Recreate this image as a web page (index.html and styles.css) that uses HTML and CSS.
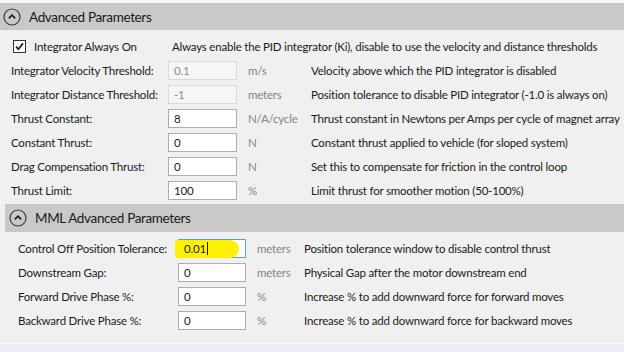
FILE: index.html
```html
<!DOCTYPE html>
<html>
<head>
<meta charset="utf-8">
<link rel="stylesheet" href="styles.css">
</head>
<body>
<div class="page">
  <div class="topstrip"></div>
  <div class="header">
    <svg class="toggle" width="18" height="18" viewBox="0 0 18 18"><circle cx="9" cy="9" r="8" fill="none" stroke="#3a3a3a" stroke-width="1.2"/><path d="M5.8 10.4 L9 7.2 L12.2 10.4" fill="none" stroke="#1a1a1a" stroke-width="1.6"/></svg>
    <span class="htitle">Advanced Parameters</span>
  </div>
  <div class="section s1">
    <div class="checkrow">
      <span class="check"><svg width="11" height="11" viewBox="0 0 11 11"><path d="M2 5.6 L4.4 8.2 L9 2.4" fill="none" stroke="#1a1a1a" stroke-width="1.7"/></svg></span>
      <span class="checklabel">Integrator Always On</span>
      <span class="checkdesc">Always enable the PID integrator (Ki), disable to use the velocity and distance thresholds</span>
    </div>
    <div class="grid g1">
      <span class="lbl">Integrator Velocity Threshold:</span><span class="box dis">0.1</span><span class="unit">m/s</span><span class="desc">Velocity above which the PID integrator is disabled</span>
      <span class="lbl">Integrator Distance Threshold:</span><span class="box dis">-1</span><span class="unit">meters</span><span class="desc">Position tolerance to disable PID integrator (-1.0 is always on)</span>
      <span class="lbl">Thrust Constant:</span><span class="box">8</span><span class="unit">N/A/cycle</span><span class="desc">Thrust constant in Newtons per Amps per cycle of magnet array</span>
      <span class="lbl">Constant Thrust:</span><span class="box">0</span><span class="unit">N</span><span class="desc">Constant thrust applied to vehicle (for sloped system)</span>
      <span class="lbl">Drag Compensation Thrust:</span><span class="box">0</span><span class="unit">N</span><span class="desc">Set this to compensate for friction in the control loop</span>
      <span class="lbl">Thrust Limit:</span><span class="box">100</span><span class="unit">%</span><span class="desc">Limit thrust for smoother motion (50-100%)</span>
    </div>
  </div>
  <div class="sub">
    <div class="header h2">
      <svg class="toggle" width="18" height="18" viewBox="0 0 18 18"><circle cx="9" cy="9" r="8" fill="none" stroke="#3a3a3a" stroke-width="1.2"/><path d="M5.8 10.4 L9 7.2 L12.2 10.4" fill="none" stroke="#1a1a1a" stroke-width="1.6"/></svg>
      <span class="htitle">MML Advanced Parameters</span>
    </div>
    <div class="grid g2">
      <span class="lbl">Control Off Position Tolerance:</span><span class="box focus"><span class="mark"></span><span class="val">0.01</span><span class="caret"></span></span><span class="unit">meters</span><span class="desc">Position tolerance window to disable control thrust</span>
      <span class="lbl">Downstream Gap:</span><span class="box">0</span><span class="unit">meters</span><span class="desc">Physical Gap after the motor downstream end</span>
      <span class="lbl">Forward Drive Phase %:</span><span class="box">0</span><span class="unit">%</span><span class="desc">Increase % to add downward force for forward moves</span>
      <span class="lbl">Backward Drive Phase %:</span><span class="box">0</span><span class="unit">%</span><span class="desc">Increase % to add downward force for backward moves</span>
    </div>
  </div>
  <div class="footer"></div>
</div>
</body>
</html>
```
FILE: styles.css
```css
* { box-sizing: border-box; }
html, body { margin: 0; padding: 0; }
body {
  width: 624px;
  height: 352px;
  overflow: hidden;
  background: #f0f0f0;
  font-family: Lato, "Open Sans", sans-serif;
  font-size: 11.5px;
  letter-spacing: -0.2px;
  color: #1b1b1b;
}
.page { display: flex; flex-direction: column; height: 352px; }
.topstrip { height: 3px; background: #f7f7f7; }
.header {
  height: 27px;
  background: #c9c9c9;
  display: flex;
  align-items: center;
  padding-left: 3px;
  gap: 8px;
}
.toggle { display: block; }
.htitle { font-size: 13.5px; letter-spacing: -0.35px; color: #1a1a1a; }
.section.s1 { padding: 4px 0 0 11px; }
.checkrow {
  height: 24px;
  display: flex;
  align-items: center;
}
.check {
  width: 13px;
  height: 13px;
  margin-left: 2px;
  border: 1px solid #333;
  background: #fff;
  display: flex;
  align-items: center;
  justify-content: center;
}
.checklabel { margin-left: 8px; width: 138px; white-space: nowrap; }
.checkdesc { white-space: nowrap; }
.grid {
  display: grid;
  grid-auto-rows: 24px;
  align-items: center;
}
.g1 { grid-template-columns: 157px 80px 63px 1fr; }
.lbl { white-space: nowrap; }
.box {
  height: 19px;
  width: 69px;
  border: 1px solid #abadb3;
  background: #fff;
  padding-left: 5px;
  display: flex;
  align-items: center;
  position: relative;
}
.box.dis { background: #f6f6f6; border-color: #d9d9d9; color: #8c8c8c; }
.unit { color: #858585; }
.desc { white-space: nowrap; }
.sub { margin: 2px 0 0 5px; }
.header.h2 { height: 28px; padding-left: 4px; }
.g2 { padding: 4px 0 11px 13px; grid-template-columns: 160px 79px 47px 1fr; }
.g2 .box { width: 68px; }
.box.focus { border-color: #5b9fe0; background: #fff; }
.mark {
  position: absolute;
  left: -4px;
  top: 0;
  width: 64px;
  height: 18px;
  background: #fff200;
  border-radius: 3px 9px 9px 3px;
}
.val { position: relative; }
.caret { position: relative; width: 1px; height: 13px; background: #1a1a1a; margin-left: 1px; }
.footer { border-top: 1px solid #fbfbfb; flex: 1; background: #e9eef5; }
```
